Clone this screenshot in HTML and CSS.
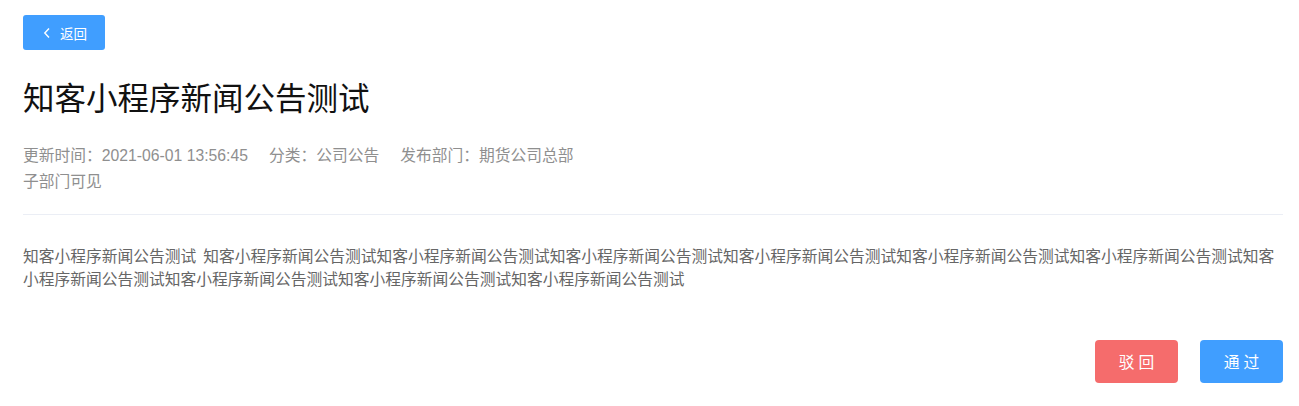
FILE: index.html
```html
<!DOCTYPE html>
<html lang="zh-CN">
<head>
<meta charset="utf-8">
<title>知客小程序新闻公告测试</title>
<link rel="stylesheet" href="styles.css">
</head>
<body>
<div class="page">
  <button class="btn-back" type="button">
    <svg class="chev" width="8" height="12" viewBox="0 0 8 12"><path d="M6 1.5 L1.8 6 L6 10.5" fill="none" stroke="#fff" stroke-width="1.4"/></svg>
    <span>返回</span>
  </button>
  <h1 class="title">知客小程序新闻公告测试</h1>
  <div class="meta">
    <div class="meta-row">
      <span class="meta-item">更新时间：<span class="latin">2021-06-01 13:56:45</span></span>
      <span class="meta-item">分类：公司公告</span>
      <span class="meta-item">发布部门：期货公司总部</span>
    </div>
    <div class="meta-row">子部门可见</div>
  </div>
  <div class="content">知客小程序新闻公告测试&nbsp; 知客小程序新闻公告测试知客小程序新闻公告测试知客小程序新闻公告测试知客小程序新闻公告测试知客小程序新闻公告测试知客小程序新闻公告测试知客小程序新闻公告测试知客小程序新闻公告测试知客小程序新闻公告测试知客小程序新闻公告测试</div>
  <div class="actions">
    <button class="btn btn-reject" type="button">驳回</button>
    <button class="btn btn-pass" type="button">通过</button>
  </div>
</div>
</body>
</html>
```
FILE: styles.css
```css
html, body {
  margin: 0;
  padding: 0;
  background: #fff;
}
body {
  font-family: "Liberation Sans", "Noto Sans CJK SC", sans-serif;
}
.page {
  padding: 15px 16px 0 23px;
}
.btn-back {
  display: flex;
  align-items: center;
  justify-content: center;
  gap: 9px;
  width: 82px;
  height: 35px;
  padding: 0 0 0 2px;
  border: none;
  border-radius: 3px;
  background: #409eff;
  color: #fff;
  font-family: "Noto Sans CJK SC", sans-serif;
  font-size: 13.5px;
}
.chev {
  display: block;
}
.title {
  margin: 24px 0 0;
  font-size: 31.5px;
  line-height: 44px;
  font-weight: 400;
  color: #111;
  font-family: "Noto Sans CJK SC", sans-serif;
}
.meta {
  margin-top: 25px;
  padding-bottom: 19px;
  border-bottom: 1px solid #ebeef5;
  font-size: 15.75px;
  line-height: 26px;
  color: #8f8f8f;
}
.meta-row {
  display: flex;
  gap: 21px;
}
.latin {
  font-family: "Liberation Sans", sans-serif;
}
.content {
  margin-top: 28.5px;
  font-size: 15.75px;
  line-height: 23px;
  color: #666;
  font-family: "Noto Sans CJK SC", sans-serif;
}
.actions {
  display: flex;
  justify-content: flex-end;
  gap: 22px;
  margin-top: 50px;
}
.btn {
  width: 83px;
  height: 43px;
  border: none;
  border-radius: 4px;
  color: #fff;
  font-family: "Noto Sans CJK SC", sans-serif;
  font-size: 15.75px;
  letter-spacing: 4px;
  padding: 0 0 0 4px;
}
.btn-reject {
  background: #f56c6c;
}
.btn-pass {
  background: #409eff;
}
```
